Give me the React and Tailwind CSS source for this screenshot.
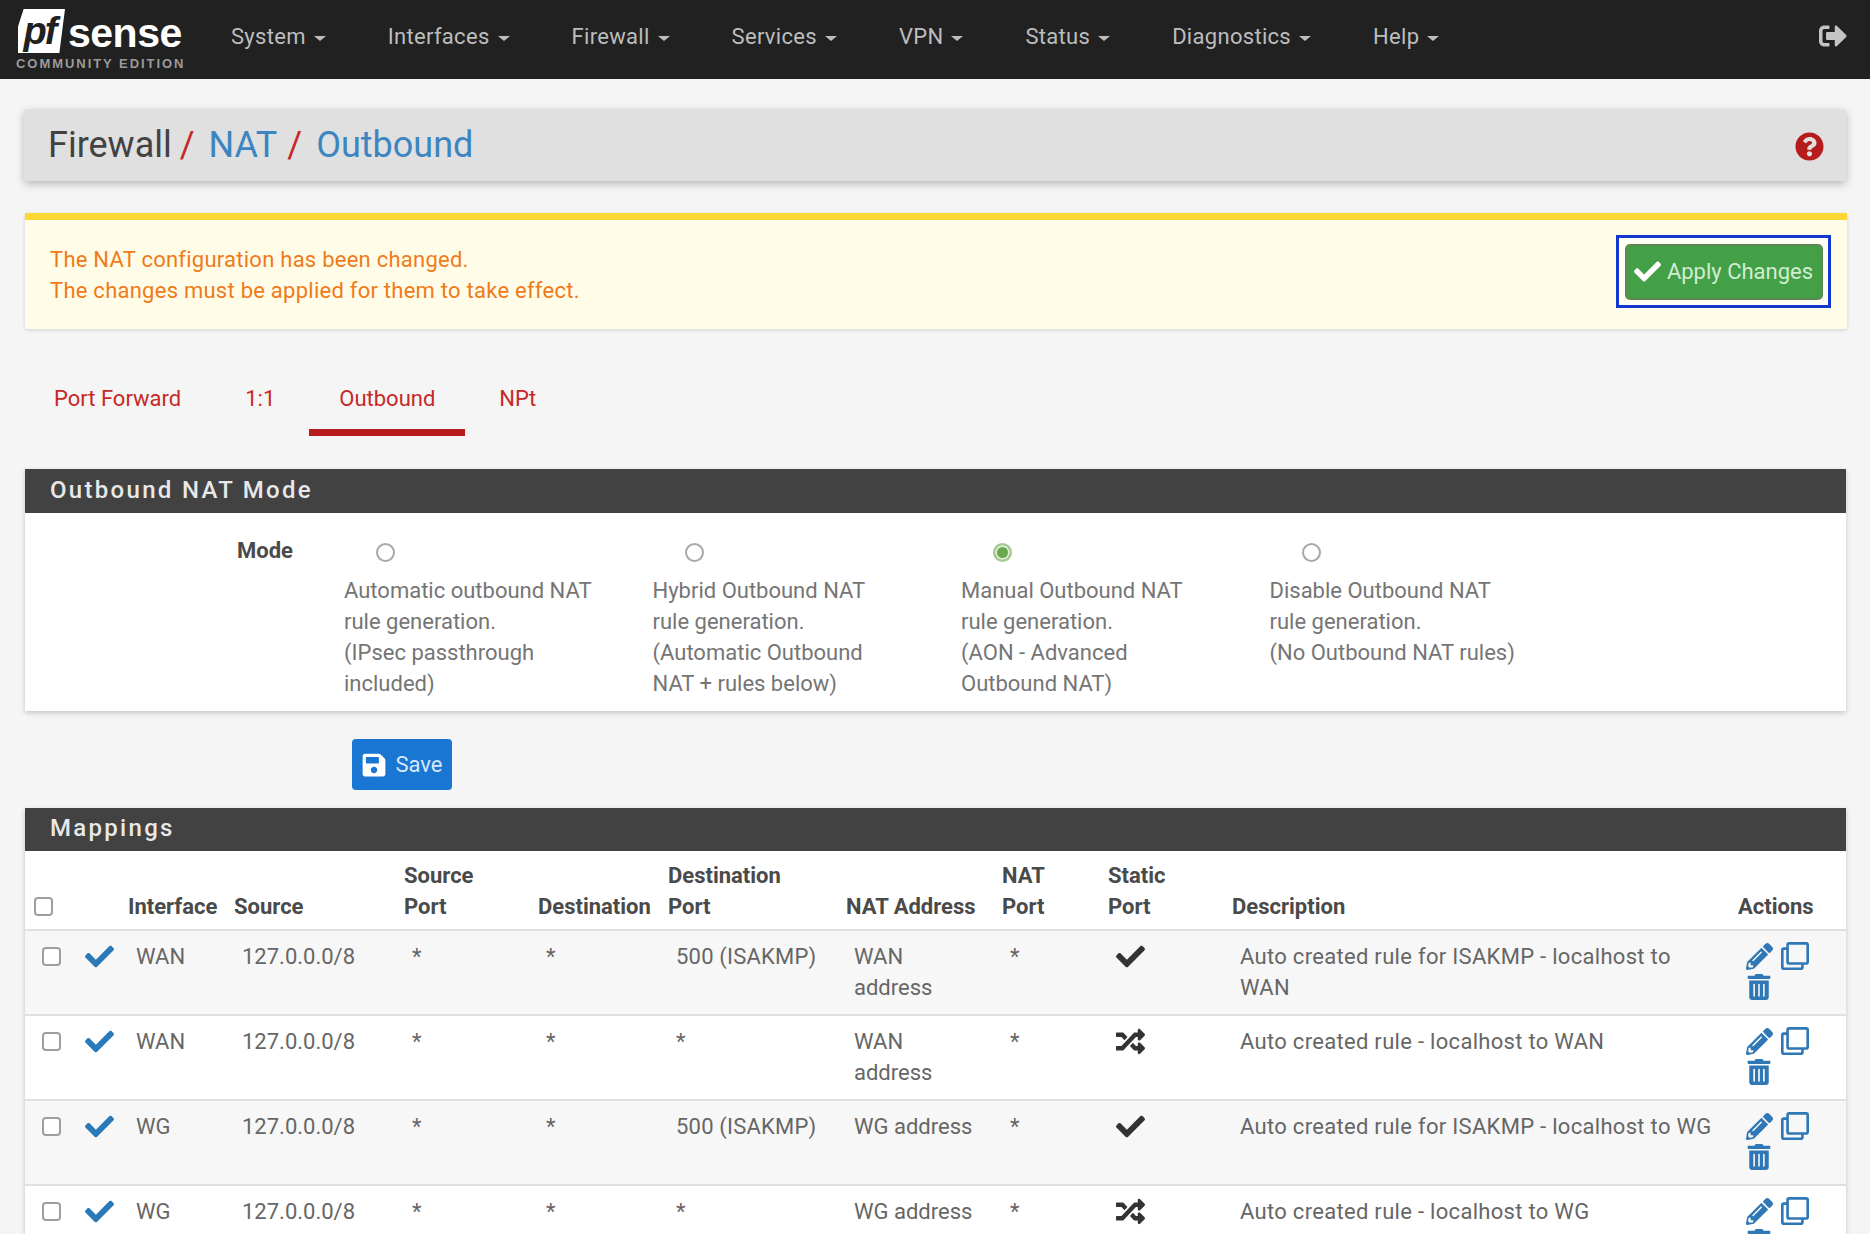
import { FaCheck, FaPencilAlt, FaQuestionCircle, FaRandom, FaRegClone, FaSave, FaSignOutAlt, FaTrashAlt } from "react-icons/fa";

const navItems = ["System", "Interfaces", "Firewall", "Services", "VPN", "Status", "Diagnostics", "Help"];

const modes = [
  { lines: ["Automatic outbound NAT", "rule generation.", "(IPsec passthrough", "included)"] },
  { lines: ["Hybrid Outbound NAT", "rule generation.", "(Automatic Outbound", "NAT + rules below)"] },
  { lines: ["Manual Outbound NAT", "rule generation.", "(AON - Advanced", "Outbound NAT)"], checked: true },
  { lines: ["Disable Outbound NAT", "rule generation.", "(No Outbound NAT rules)"] },
];

const rows = [
  { iface: "WAN", port: "500 (ISAKMP)", nat: "WAN address", isStatic: true, desc: "Auto created rule for ISAKMP - localhost to WAN" },
  { iface: "WAN", port: "*", nat: "WAN address", isStatic: false, desc: "Auto created rule - localhost to WAN" },
  { iface: "WG", port: "500 (ISAKMP)", nat: "WG address", isStatic: true, desc: "Auto created rule for ISAKMP - localhost to WG" },
  { iface: "WG", port: "*", nat: "WG address", isStatic: false, desc: "Auto created rule - localhost to WG" },
];

const thCls = "pl-[3px] pb-[7px] text-left align-bottom font-bold text-[#4a4a4a] whitespace-nowrap";
const tdCls = "pl-[11px] pr-[15px] pt-[10px] align-top";

function Logo() {
  return (
    <div className="w-[231px] pl-[18px] pt-[9px] shrink-0 h-full">
      <div className="flex items-end h-[44px]">
        <div className="w-[47px] h-[44px] bg-white flex items-center justify-center [clip-path:polygon(12%_0,100%_0,88%_100%,0_100%,0_40%)]">
          <span className="font-['Liberation_Sans'] font-bold italic text-[38px] leading-none text-[#212121] tracking-[-2px] pr-1">pf</span>
        </div>
        <span className="ml-[3px] mb-[1px] font-['Liberation_Sans'] font-bold text-[41px] leading-[38px] text-white tracking-[-0.5px]">sense</span>
      </div>
      <div className="-ml-[2px] font-['Liberation_Sans'] font-bold text-[13px] leading-none mt-[4px] text-[#9a9a9a] tracking-[1.95px] whitespace-nowrap">COMMUNITY EDITION</div>
    </div>
  );
}

export default function App() {
  return (
    <div className="h-[1234px] overflow-hidden bg-[#f5f5f5] font-['Roboto',sans-serif] text-[22px] leading-[31px] text-[#666666]">
      {/* Navbar */}
      <nav className="h-[79px] bg-[#212121] flex items-center">
        <Logo />
        <ul className="flex gap-[62px] -mt-[6px]">
          {navItems.map((item) => (
            <li key={item} className="flex items-center gap-[8px] text-[#bdbdbd] tracking-[0.3px]">
              {item}
              <span className="w-0 h-0 mt-[3px] border-x-[6px] border-x-transparent border-t-[5px] border-t-[#bdbdbd]" />
            </li>
          ))}
        </ul>
        <FaSignOutAlt className="ml-auto mr-[23px] -mt-[8px] text-[#c4c4c4]" size={28} />
      </nav>

      <div className="mx-6">
        {/* Breadcrumb */}
        <div className="mt-[30px] h-[72px] bg-[#e0e0e0] rounded-[2px] shadow-[0_3px_8px_rgba(0,0,0,0.25)] flex items-center pl-[24px] pr-[22px] text-[36px] leading-none">
          <span className="text-[#424242]">Firewall</span>
          <span className="ml-[8px] text-[#c62828]">/</span>
          <span className="ml-[14px] text-[#3c85c0]">NAT</span>
          <span className="ml-[10px] text-[#c62828]">/</span>
          <span className="ml-[14px] text-[#3c85c0]">Outbound</span>
          <FaQuestionCircle className="ml-auto mt-[3px] text-[#b71c1c]" size={29} />
        </div>

        {/* Alert */}
        <div className="mt-[32px] ml-px -mr-px h-[116px] bg-[#fffde7] border-t-[7px] border-[#fdd835] shadow-[0_1px_4px_rgba(0,0,0,0.15)] flex justify-between pl-[25px] pr-[16px]">
          <div className="self-center text-[#f07a1a] tracking-[0.25px]">
            The NAT configuration has been changed.
            <br />
            The changes must be applied for them to take effect.
          </div>
          <div className="mt-[15px] w-[215px] h-[73px] border-[3px] border-[#1338cf] bg-[#fffef4] flex items-center justify-center">
            <button className="w-[198px] h-[56px] bg-[#43a047] border-2 border-[#5b8a55] rounded-[5px] flex items-center justify-center gap-[6px] text-[#d2edd3] whitespace-nowrap">
              <FaCheck className="text-white" size={27} />
              Apply Changes
            </button>
          </div>
        </div>

        {/* Tabs */}
        <div className="mt-[38px] flex gap-[4px] text-[#c62828]">
          {["Port Forward", "1:1", "Outbound", "NPt"].map((tab) => (
            <div
              key={tab}
              className={"h-[69px] px-[30px] pt-[16px] border-b-[7px] " + (tab === "Outbound" ? "border-[#b71c1c]" : "border-transparent")}
            >
              {tab}
            </div>
          ))}
        </div>

        {/* Mode panel */}
        <section className="mt-[33px] ml-px bg-white shadow-[0_2px_5px_rgba(0,0,0,0.2)]">
          <h2 className="h-[44px] bg-[#424242] pl-[25px] pb-[2px] flex items-center text-[24px] font-medium text-[#e8e8e8] tracking-[2.3px]">Outbound NAT Mode</h2>
          <div className="h-[198px] flex">
            <div className="w-[268px] pt-[22px] text-right font-bold text-[#4a4a4a]">Mode</div>
            <div className="ml-[51px] flex">
              {modes.map((m, i) => (
                <label key={i} className="w-[308.5px] text-[#757575]">
                  <span className="block pt-[30px] pl-[32px] h-[62px]">
                    <input
                      type="radio"
                      name="mode"
                      defaultChecked={m.checked}
                      className="block w-[19px] h-[19px] appearance-none rounded-full border-2 border-[#a8a8a8] bg-white checked:border-[#a5c98f] checked:bg-[#6aa84f] checked:[box-shadow:inset_0_0_0_2px_#dfeed5]"
                    />
                  </span>
                  {m.lines.map((l) => (
                    <span key={l} className="block whitespace-nowrap">{l}</span>
                  ))}
                </label>
              ))}
            </div>
          </div>
        </section>

        {/* Save */}
        <div className="mt-[28px] ml-[328px]">
          <button className="w-[100px] h-[51px] bg-[#1976d2] rounded-[4px] flex items-center justify-center gap-[8px] text-[#d6e7f8]">
            <FaSave className="text-white" size={26} />
            Save
          </button>
        </div>

        {/* Mappings */}
        <section className="mt-[18px] ml-px bg-white shadow-[0_2px_5px_rgba(0,0,0,0.2)]">
          <h2 className="h-[43px] bg-[#424242] pl-[25px] pb-[2px] flex items-center text-[24px] font-medium text-[#e8e8e8] tracking-[2.3px]">Mappings</h2>
          <table className="w-full table-fixed border-collapse">
            <colgroup>
              <col className="w-[55px]" />
              <col className="w-[45px]" />
              <col className="w-[106px]" />
              <col className="w-[170px]" />
              <col className="w-[134px]" />
              <col className="w-[130px]" />
              <col className="w-[178px]" />
              <col className="w-[156px]" />
              <col className="w-[106px]" />
              <col className="w-[124px]" />
              <col className="w-[506px]" />
              <col />
            </colgroup>
            <thead>
              <tr className="h-[79px]">
                <th className="pl-[9px] pb-[13px] align-bottom text-left">
                  <input type="checkbox" className="block w-[19px] h-[19px] appearance-none rounded-[4px] border-2 border-[#9e9e9e] bg-white" />
                </th>
                <th />
                <th className={thCls}>Interface</th>
                <th className={thCls}>Source</th>
                <th className={thCls}>Source<br />Port</th>
                <th className={thCls}>Destination</th>
                <th className={thCls}>Destination<br />Port</th>
                <th className={thCls}>NAT Address</th>
                <th className={thCls}>NAT<br />Port</th>
                <th className={thCls}>Static<br />Port</th>
                <th className={thCls}>Description</th>
                <th className={thCls}>Actions</th>
              </tr>
            </thead>
            <tbody>
              {rows.map((r, i) => (
                <tr key={i} className={"h-[85px] border-t-2 border-[#e0e0e0] " + (i % 2 === 0 ? "bg-[#f7f7f7]" : "bg-white")}>
                  <td className="pl-[17px] pt-[16px] align-top">
                    <input type="checkbox" className="block w-[19px] h-[19px] appearance-none rounded-[4px] border-2 border-[#9e9e9e] bg-white" />
                  </td>
                  <td className="pt-[11px] pl-[5px] align-top">
                    <FaCheck className="text-[#2a7ab9]" size={29} />
                  </td>
                  <td className={tdCls}>{r.iface}</td>
                  <td className={tdCls}>127.0.0.0/8</td>
                  <td className={tdCls}>*</td>
                  <td className={tdCls}>*</td>
                  <td className={tdCls + " tracking-[0.2px]"}>{r.port}</td>
                  <td className={tdCls}>{r.nat}</td>
                  <td className={tdCls}>*</td>
                  <td className="pl-[11px] pt-[11px] align-top">
                    {r.isStatic ? <FaCheck className="text-[#333333]" size={29} /> : <FaRandom className="text-[#333333]" size={29} />}
                  </td>
                  <td className={tdCls + " tracking-[0.3px]"}>{r.desc}</td>
                  <td className="pl-[11px] pt-[11px] align-top text-[#2f78b5]">
                    <div className="flex gap-[8px] items-center">
                      <FaPencilAlt size={27} />
                      <FaRegClone size={28} />
                    </div>
                    <FaTrashAlt className="mt-[4px]" size={26} />
                  </td>
                </tr>
              ))}
            </tbody>
          </table>
        </section>
      </div>
    </div>
  );
}
